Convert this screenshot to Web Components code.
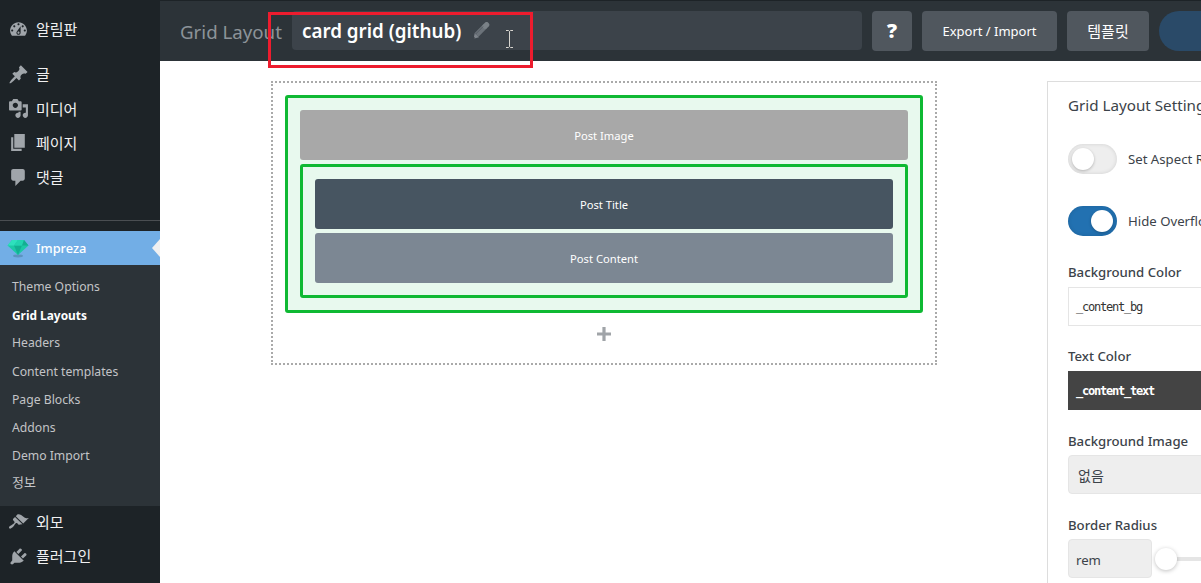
<!DOCTYPE html>
<html lang="ko"><head><meta charset="utf-8"><title>Grid Layout</title>
<style>
html,body{margin:0;padding:0;height:583px;overflow:hidden;background:#fff}
body{font-family:"Noto Sans","Noto Sans CJK KR",sans-serif;font-size:13px}
</style></head><body>
<gl-app>
  <wp-sidebar slot="side"></wp-sidebar>
  <gl-topbar slot="top"></gl-topbar>
  <gl-canvas slot="canvas"></gl-canvas>
  <gl-settings slot="panel"></gl-settings>
</gl-app>
<red-note></red-note>
<script>
const FONT='"Noto Sans","Noto Sans CJK KR",sans-serif';
function def(name,html){
  customElements.define(name,class extends HTMLElement{
    constructor(){super();const r=this.attachShadow({mode:'open'});r.innerHTML=typeof html==='function'?html(this):html;}
    connectedCallback(){
      if(typeof html==='function'){this.shadowRoot.innerHTML=html(this);}
    }
  });
}
const ICONS={
 dashboard:'M3.76 16h12.48c1.1-1.37 1.76-3.11 1.76-5 0-4.42-3.58-8-8-8s-8 3.58-8 8c0 1.89.66 3.63 1.76 5zM10 4c.55 0 1 .45 1 1s-.45 1-1 1-1-.45-1-1 .45-1 1-1zM6 6c.55 0 1 .45 1 1s-.45 1-1 1-1-.45-1-1 .45-1 1-1zm8 0c.55 0 1 .45 1 1s-.45 1-1 1-1-.45-1-1 .45-1 1-1zm-5.37 5.55L12 7v6c0 1.1-.9 2-2 2s-2-.9-2-2c0-.57.24-1.08.63-1.45zM4 10c.55 0 1 .45 1 1s-.45 1-1 1-1-.45-1-1 .45-1 1-1zm12 0c.55 0 1 .45 1 1s-.45 1-1 1-1-.45-1-1 .45-1 1-1zm-5 3c0-.55-.45-1-1-1s-1 .45-1 1 .45 1 1 1 1-.45 1-1z',
 pin:'M10.44 3.02l1.82-1.82 6.36 6.35-1.83 1.82c-1.05-.68-2.48-.57-3.41.36l-.75.75c-.92.93-1.04 2.35-.35 3.41l-1.83 1.82-2.41-2.41-2.8 2.79c-.42.42-3.38 2.71-3.8 2.29s1.86-3.39 2.28-3.81l2.79-2.79L4.1 9.36l1.83-1.82c1.05.69 2.48.57 3.4-.36l.75-.75c.93-.92 1.05-2.35.36-3.41z',
 media:'M13 11V4c0-.55-.45-1-1-1h-1.67L9 1H5L3.67 3H2c-.55 0-1 .45-1 1v7c0 .55.45 1 1 1h10c.55 0 1-.45 1-1zM7 4.5c1.38 0 2.5 1.12 2.5 2.5S8.38 9.5 7 9.5 4.5 8.38 4.5 7 5.62 4.5 7 4.5zM14 6h5v10.5c0 1.38-1.12 2.5-2.5 2.5S14 17.88 14 16.5s1.12-2.5 2.5-2.5c.17 0 .34.02.5.05V9h-3V6zm-4 8.05V13h2v3.5c0 1.38-1.12 2.5-2.5 2.5S7 17.88 7 16.5 8.12 14 9.5 14c.17 0 .34.02.5.05z',
 page:'M6 15V2h10v13H6zm-1 1h8v2H3V5h2v11z',
 comment:'M5 2h9c1.1 0 2 .9 2 2v7c0 1.1-.9 2-2 2h-2l-5 5v-5H5c-1.1 0-2-.9-2-2V4c0-1.1.9-2 2-2z',
 brush:'M14.48 11.06L7.41 3.99l1.5-1.5c.5-.56 2.3-.47 3.51.32 1.21.8 1.43 1.28 2.91 2.1 1.18.64 2.45 1.26 4.45.85zm-.71.71L6.7 4.7 4.93 6.47c-.39.39-.39 1.02 0 1.41l1.06 1.06c.39.39.39 1.03 0 1.42-.6.6-1.43 1.11-2.21 1.69-.35.26-.7.53-1.01.84C1.43 13.23.4 14.75 1.21 15.56c.81.82 2.33-.21 3.67-1.56.31-.31.58-.66.84-1.01.58-.78 1.09-1.61 1.69-2.21.39-.39 1.02-.39 1.41 0l1.06 1.06c.39.39 1.02.39 1.41 0z',
 plug:'M13.11 4.36L9.87 7.6 8 5.73l3.24-3.24c.35-.34 1.05-.2 1.56.32.52.51.66 1.21.31 1.55zm-8 1.77l.91-1.12 9.01 9.01-1.19.84c-.71.71-2.63 1.16-3.82 1.16H6.14L4.9 17.26c-.59.59-1.54.59-2.12 0-.59-.58-.59-1.53 0-2.12l1.24-1.24v-3.88c0-1.13.4-3.19 1.09-3.89zm7.26 3.97l3.24-3.24c.34-.35 1.04-.21 1.55.31.52.51.66 1.21.31 1.55l-3.24 3.25z'
};
def('gl-app',`<style>
:host{display:grid;grid-template-columns:160px 1fr;grid-template-rows:61px 1fr;width:1201px;height:583px;overflow:hidden;font-family:${FONT}}
.side{grid-row:1/3;min-height:0;overflow:hidden}
.top{min-width:0;overflow:hidden}
.body{display:flex;min-width:0;min-height:0;overflow:hidden;padding:20px 0 0 111px;gap:110px}
</style><div class="side"><slot name="side"></slot></div><div class="top"><slot name="top"></slot></div><div class="body"><slot name="canvas"></slot><slot name="panel"></slot></div>`);

def('wp-item',el=>`<style>
:host{display:flex;align-items:center;height:34.4px;color:#f0f0f1;font-size:15px;flex:none}
:host([short]){height:34px}
svg{width:21px;height:21px;margin-left:8px;margin-right:7px;fill:#a0a5aa;flex:none}
span{padding-bottom:1px}
:host([short]) span{padding-bottom:3px}
</style><svg viewBox="0 0 20 20"><path d="${ICONS[el.getAttribute('icon')]||''}"/></svg><span><slot></slot></span>`);

def('wp-subitem',`<style>
:host{display:block;height:28.2px;line-height:28px;padding-left:12px;color:#c3c4c7;font-size:12.2px}
:host([ko]){font-size:13px;line-height:24px}
:host([current]){color:#fff;font-weight:700;font-size:11.9px}
</style><slot></slot>`);

def('wp-sidebar',`<style>
:host{display:flex;flex-direction:column;width:160px;height:583px;background:#1d2327;padding-top:12px;box-sizing:border-box}
.gap1{height:10.6px;flex:none}
.hr{height:1px;background:#4a4e52;margin:25.4px 0 10px;flex:none}
.imp{display:flex;align-items:center;height:34px;background:#72aee6;color:#fff;font-size:12.8px;font-weight:500;position:relative;flex:none}
.imp svg{width:22px;height:20px;margin-left:7px;margin-right:7px;flex:none}
.imp i{position:absolute;right:0;top:8px;border:9px solid transparent;border-right-color:#f0f0f1;border-left-width:0;border-right-width:8px}
.sub{background:#2c3338;padding:8px 0 7px;height:241px;box-sizing:border-box;flex:none}
</style>
<wp-item icon="dashboard">알림판</wp-item><div class="gap1"></div>
<wp-item icon="pin">글</wp-item><wp-item icon="media">미디어</wp-item><wp-item icon="page">페이지</wp-item><wp-item icon="comment">댓글</wp-item>
<div class="hr"></div>
<div class="imp"><svg viewBox="0 0 22 20"><ellipse cx="11" cy="18" rx="5" ry="1.4" fill="#5d93bf"/><polygon points="5,2 17,2 21.5,7.5 11,17 .5,7.5" fill="#1cc9a6"/><polygon points="5,2 11,2 7,7.5 .5,7.5" fill="#2ee0bd"/><polygon points="7,7.5 15,7.5 11,17" fill="#12b092"/><polygon points="11,2 17,2 15,7.5 7,7.5" fill="#22d3b0"/><polygon points="17,2 21.5,7.5 15,7.5" fill="#14ae92"/></svg>Impreza<i></i></div>
<div class="sub">
<wp-subitem>Theme Options</wp-subitem><wp-subitem current>Grid Layouts</wp-subitem><wp-subitem>Headers</wp-subitem><wp-subitem>Content templates</wp-subitem><wp-subitem>Page Blocks</wp-subitem><wp-subitem>Addons</wp-subitem><wp-subitem>Demo Import</wp-subitem><wp-subitem ko>정보</wp-subitem>
</div>
<wp-item short icon="brush">외모</wp-item><wp-item short icon="plug">플러그인</wp-item>`);

def('gl-topbar',`<style>
:host{display:flex;position:relative;align-items:center;height:61px;box-sizing:border-box;background:#2c3338;border-top:1px solid #1d2327;padding:0 0 0 20px;gap:10px;color:#fff;overflow:visible}
.lbl{color:#8c9399;font-size:18.7px;width:102px;flex:none;white-space:nowrap}
.title{display:flex;align-items:center;width:570px;height:39px;flex:none;background:#3c434a;border-radius:4px;box-sizing:border-box;padding:1px 10px 0;font-size:18.8px;font-weight:600;margin-bottom:1px}
.title svg{width:18px;height:18px;margin-left:11px;margin-bottom:1px}
.btn{display:flex;align-items:center;justify-content:center;height:40px;box-sizing:border-box;background:#50575e;border-radius:4px;font-size:13px;flex:none;margin-bottom:1px}
.q{width:40px;font-size:20px;font-weight:900}
.ex{width:135px}.tp{width:82px;font-size:15px}
.save{width:120px;height:40px;background:#2a4a68;border-radius:20px;flex:none;margin-bottom:1px}
.cursor{position:absolute;left:345px;top:29px;width:9px;height:18px}
</style>
<div class="lbl">Grid Layout</div>
<div class="title">card grid (github)<svg viewBox="0 0 18 18"><path d="M4.6 12.8L13 4.4" stroke="#6b7279" stroke-width="5.4" stroke-linecap="butt" fill="none"/><path d="M13.2 4.2l1.4-1.4" stroke="#7a8187" stroke-width="5.4" stroke-linecap="round" fill="none"/><path d="M2.7 10.9l4.3 4.3-5.4 1.6z" fill="#7d838a"/><path d="M.9 16.9l.7-2.4 1.7 1.7z" fill="#3a3f45"/><path d="M3.5 12.2l7.6-7.6" stroke="#555c64" stroke-width="1" fill="none"/></svg></div>
<div class="btn q">?</div><div class="btn ex">Export / Import</div><div class="btn tp">템플릿</div><div class="save"></div>
<svg class="cursor" viewBox="0 0 9 18"><path d="M1 .5h2.5l1 1 1-1H8M4.5 1.5v15M1 17.5h2.5l1-1 1 1H8" stroke="#d8d6d0" fill="none"/></svg>`);

def('gl-block',`<style>
:host{display:flex;align-items:center;justify-content:center;height:50px;border-radius:3px;color:#fff;font-size:11.2px;flex:none;background:var(--bg)}
</style><slot></slot>`);

def('gl-wrap',`<style>
:host{display:flex;flex-direction:column;gap:4px;border:3px solid #0fb933;border-radius:3px;background:#e8f9ee;padding:12px;box-sizing:border-box}
</style><slot></slot>`);

def('gl-canvas',`<style>
:host{display:block;width:666px;height:284px;box-sizing:border-box;border:2px dotted #aaa;padding:12px 12px 0 12px;flex:none}
.plus{display:flex;justify-content:center;padding-top:14px}
svg{width:14px;height:14px}
</style>
<gl-wrap>
  <gl-block style="--bg:#a8a8a8">Post Image</gl-block>
  <gl-wrap>
    <gl-block style="--bg:#475561">Post Title</gl-block>
    <gl-block style="--bg:#7c8793">Post Content</gl-block>
  </gl-wrap>
</gl-wrap>
<div class="plus"><svg viewBox="0 0 14 14"><path d="M5.4 0h3.2v5.4H14v3.2H8.6V14H5.4V8.6H0V5.4h5.4z" fill="#a0a4a8"/></svg></div>`);

def('gl-toggle',`<style>
:host{display:flex;align-items:center;gap:11px;height:30px;color:#3c434a;font-size:13.2px;white-space:nowrap}
.t{width:49px;height:30px;border-radius:15px;background:#eee;position:relative;box-shadow:inset 0 0 4px rgba(0,0,0,.12);flex:none}
.k{position:absolute;left:4px;top:4px;width:22px;height:22px;border-radius:50%;background:#fff;box-shadow:0 1px 3px rgba(0,0,0,.25)}
:host([on]) .t{background:#2271b1}
:host([on]) .k{left:23px}
span{padding-bottom:1px}
</style><div class="t"><div class="k"></div></div><span><slot></slot></span>`);

def('gl-field',el=>`<style>
:host{display:block;margin-top:var(--mt,0)}
.l{font-size:13.2px;font-weight:500;color:#3c434a;line-height:19px;height:20px;box-sizing:border-box;padding-top:var(--lp,1px);margin-bottom:5px;white-space:nowrap}
</style><div class="l">${el.getAttribute('label')}</div><slot></slot>`);

def('gl-settings',`<style>
:host{display:block;width:300px;height:540px;box-sizing:border-box;border:1px solid #ddd;border-bottom:0;padding:12px 20px 0;flex:none;color:#3c434a;overflow:hidden}
h3{margin:0 0 28px;font-size:15.2px;font-weight:400;line-height:22px;white-space:nowrap}
.box{height:39px;box-sizing:border-box;display:flex;align-items:center;padding:0 7px;font-family:"DejaVu Sans Mono","Liberation Mono",monospace;font-size:12px;letter-spacing:-1.22px}
.c1{border:1px solid #e5e5e5;color:#333}
.c2{background:#444;color:#fff;font-weight:700;padding:0 8px}
.sel{background:#eee;border:1px solid #e5e5e5;border-radius:4px;font-family:${FONT};font-size:14px;letter-spacing:0;padding:0 9px}
.row{display:flex;align-items:center;position:relative}
.unit{width:84px;height:39px;box-sizing:border-box;background:#eee;border:1px solid #e5e5e5;border-radius:4px;display:flex;align-items:center;padding:2px 7px 0;font-size:13.2px}
.track{flex:1;height:4px;background:#e5e5e5;border-radius:2px;position:relative;margin-left:5px}
.kn{position:absolute;left:-2px;top:-9px;width:22px;height:22px;border-radius:50%;background:#fff;box-shadow:0 1px 4px rgba(0,0,0,.25)}
</style>
<h3>Grid Layout Settings</h3>
<gl-toggle>Set Aspect Ratio</gl-toggle>
<gl-toggle on style="margin-top:32px">Hide Overflowing Content</gl-toggle>
<gl-field label="Background Color" style="--mt:26px"><div class="box c1">_content_bg</div></gl-field>
<gl-field label="Text Color" style="--mt:20px"><div class="box c2">_content_text</div></gl-field>
<gl-field label="Background Image" style="--mt:20px;--lp:2px"><div class="box sel">없음</div></gl-field>
<gl-field label="Border Radius" style="--mt:20px;--lp:2px"><div class="row"><div class="unit">rem</div><div class="track"><div class="kn"></div></div></div></gl-field>`);
def('red-note',`<style>:host{display:block;position:absolute;left:268px;top:12px;width:265px;height:56px;box-sizing:border-box;border:3px solid #ed1c2e;pointer-events:none}</style>`);
</script>
</body></html>
